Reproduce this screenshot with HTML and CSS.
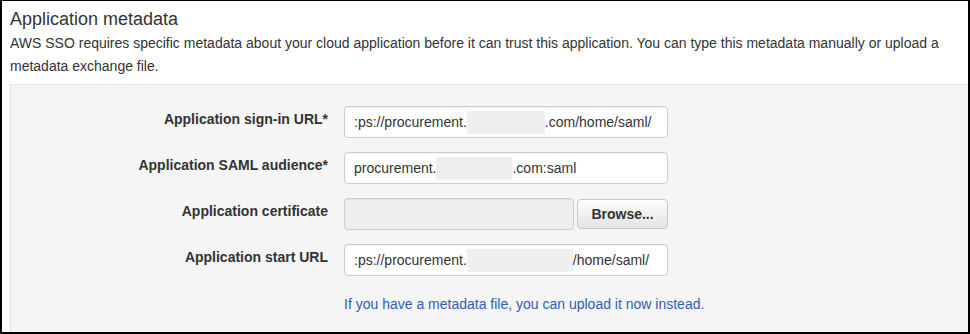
FILE: index.html
```html
<!DOCTYPE html>
<html lang="en">
<head>
  <meta charset="UTF-8">
  <title>Application metadata</title>
  <link rel="stylesheet" href="styles.css">
</head>
<body>
  <div class="frame">
    <h2 class="title">Application metadata</h2>
    <p class="intro">AWS SSO requires specific metadata about your cloud application before it can trust this application. You can type this metadata manually or upload a metadata exchange file.</p>

    <div class="panel">
      <div class="form-rows">
        <div class="form-row">
          <label class="control-label">Application sign-in URL*</label>
          <div class="field">:ps://procurement.<span class="redact w1"></span>.com/home/saml/</div>
        </div>
        <div class="form-row">
          <label class="control-label">Application SAML audience*</label>
          <div class="field">procurement.<span class="redact w2"></span>.com:saml</div>
        </div>
        <div class="form-row">
          <label class="control-label">Application certificate</label>
          <div class="file-group">
            <div class="field disabled"></div>
            <button class="browse">Browse...</button>
          </div>
        </div>
        <div class="form-row">
          <label class="control-label">Application start URL</label>
          <div class="field">:ps://procurement.<span class="redact w3"></span>/home/saml/</div>
        </div>
      </div>
      <div class="upload-link">
        <a href="#">If you have a metadata file, you can upload it now instead.</a>
      </div>
    </div>
  </div>
</body>
</html>
```

FILE: styles.css
```css
body {
  margin: 0;
  font-family: "Liberation Sans", Arial, sans-serif;
  color: #333;
  background-color: #fff;
}
.frame {
  width: 970px;
  height: 334px;
  box-sizing: border-box;
  border: 2px solid #000;
  border-top-width: 1px;
  padding-left: 8px;
  overflow: hidden;
  display: flex;
  flex-direction: column;
}
.title {
  margin: 7px 0 0;
  font-size: 18px;
  font-weight: normal;
  line-height: 22px;
}
.intro {
  margin: 2px 0 6px;
  font-size: 14px;
  line-height: 23px;
}
.panel {
  flex: 1;
  background-color: #f5f5f5;
  border: 1px solid #e6e6e6;
  border-right: none;
  border-bottom: none;
  padding-top: 21px;
}
.form-rows {
  display: flex;
  flex-direction: column;
  gap: 14px;
}
.form-row {
  display: grid;
  grid-template-columns: 317px 324px;
  column-gap: 16px;
  align-items: start;
}
.control-label {
  text-align: right;
  font-size: 14px;
  font-weight: bold;
  line-height: 20px;
  padding-top: 3px;
}
.field {
  height: 32px;
  box-sizing: border-box;
  border: 1px solid #ccc;
  border-radius: 4px;
  background-color: #fff;
  box-shadow: inset 0 1px 1px rgba(0, 0, 0, 0.05);
  padding: 0 9px;
  display: flex;
  align-items: center;
  font-size: 14px;
  white-space: nowrap;
  overflow: hidden;
}
.field.disabled {
  background-color: #eee;
  flex: 1;
}
.redact {
  display: inline-block;
  height: 23px;
  background-color: #efefef;
  flex: none;
}
.w1 { width: 78px; }
.w2 { width: 76px; }
.w3 { width: 106px; }
.file-group {
  display: flex;
  align-items: center;
  gap: 3px;
}
.browse {
  width: 91px;
  height: 30px;
  border: 1px solid #c8c8c8;
  border-radius: 4px;
  background: linear-gradient(#fdfdfd, #e4e4e4);
  font-family: inherit;
  font-size: 14px;
  font-weight: bold;
  color: #333;
  padding: 0;
}
.upload-link {
  margin-top: 18px;
  padding-left: 333px;
  font-size: 14px;
  line-height: 20px;
}
.upload-link a {
  color: #2d5fb4;
  text-decoration: none;
}
```
